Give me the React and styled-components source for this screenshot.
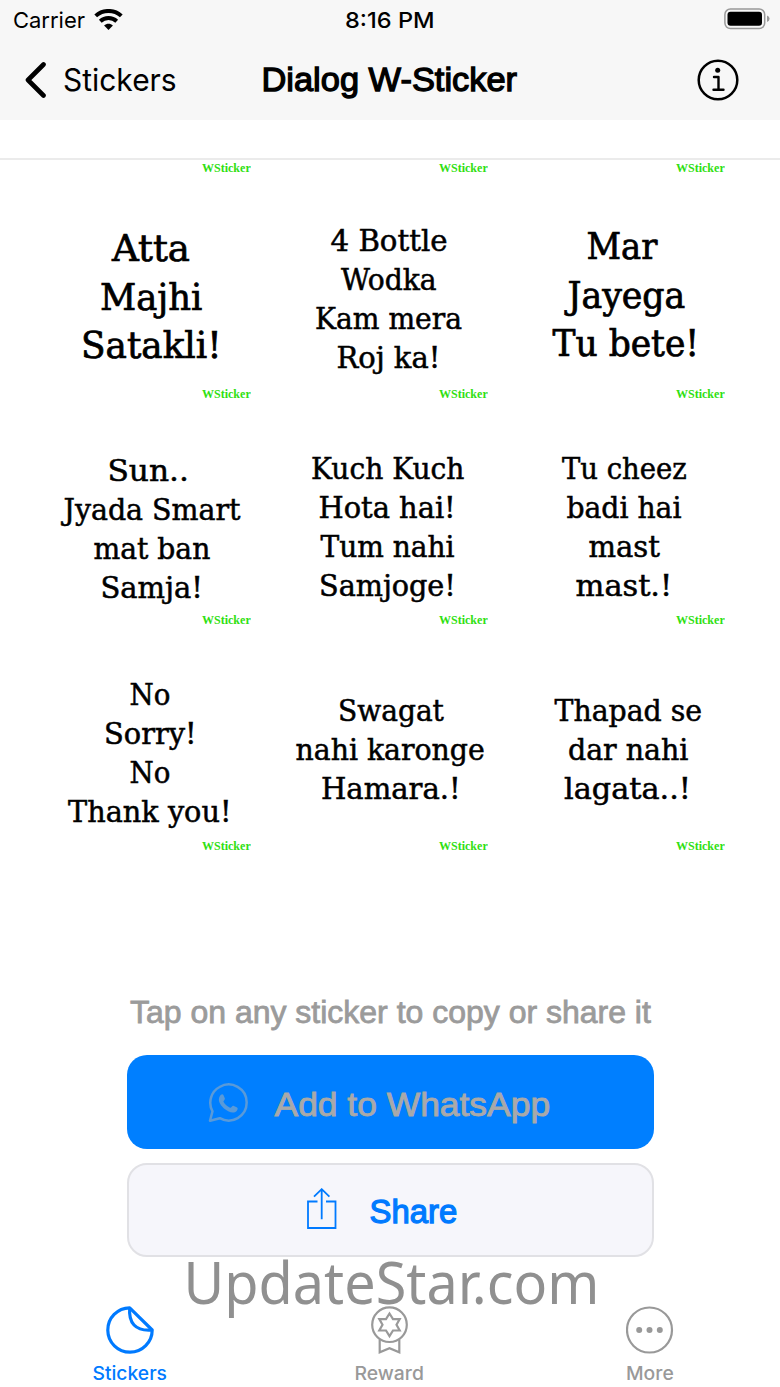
import React, { useLayoutEffect, useRef, useState } from "react";
import styled, { createGlobalStyle } from "styled-components";

const GlobalStyle = createGlobalStyle`
  * {
    box-sizing: border-box;
  }
  body {
    margin: 0;
    background: #fff;
    font-family: Inter, "Liberation Sans", sans-serif;
  }
`;

const Screen = styled.div`
  position: relative;
  display: flex;
  flex-direction: column;
  width: 780px;
  height: 1387px;
  overflow: hidden;
  background: #fff;
  color: #000;
`;

const Header = styled.header`
  height: 120px;
  background: #f7f7f7;
`;

const StatusBar = styled.div`
  display: grid;
  grid-template-columns: 1fr auto 1fr;
  align-items: center;
  height: 40px;
  padding: 0 10px 0 13px;
  font-size: 22px;
`;

const Carrier = styled.div`
  display: flex;
  align-items: center;
  gap: 9px;
`;

const Time = styled.div`
  padding-right: 4px;
  font-weight: 500;
`;

const Battery = styled.div`
  display: flex;
  justify-content: flex-end;
  padding-bottom: 2px;
`;

const NavBar = styled.nav`
  display: grid;
  grid-template-columns: 1fr auto 1fr;
  align-items: center;
  height: 79px;
  padding: 0 41px 0 24px;
`;

const BackLink = styled.div`
  display: flex;
  align-items: center;
  gap: 17px;
  font-size: 31px;
`;

const Title = styled.h1`
  margin: 0;
  padding: 0 0 0 16px;
  font-family: "Liberation Sans", sans-serif;
  font-size: 34px;
  font-weight: 400;
  -webkit-text-stroke: 1.3px;
`;

const InfoButton = styled.div`
  display: flex;
  justify-content: flex-end;
`;

const Divider = styled.div`
  height: 40px;
  border-bottom: 2px solid #ebebeb;
`;

const Grid = styled.div`
  display: grid;
  grid-template-columns: repeat(3, 237.4px);
  grid-template-rows: 15px repeat(3, 226px);
  align-items: end;
  padding-left: 15px;
`;

const Sticker = styled.div`
  display: flex;
  flex-direction: column;
  justify-content: space-between;
  height: 226px;
  padding-top: ${(p) => p.$top}px;
`;

const Lines = styled.div`
  display: flex;
  flex-direction: column;
  align-items: center;
  margin-left: ${(p) => 36 + p.$shift * 2}px;
  margin-right: 1px;
  font-family: "DejaVu Serif Condensed", "DejaVu Serif", serif;
  font-stretch: condensed;
  font-size: ${(p) => (p.$big ? 37 : 30)}px;
  line-height: ${(p) => (p.$big ? 48.6 : 39)}px;
  -webkit-text-stroke: ${(p) => (p.$big ? 0.7 : 0.5)}px;
`;

const Tag = styled.div`
  display: flex;
  justify-content: flex-end;
  padding-right: 2px;
  color: #2fe010;
  font-family: "Liberation Serif", serif;
  font-size: 13px;
  font-weight: 700;
  line-height: 14px;
`;

const Actions = styled.section`
  display: flex;
  flex-direction: column;
  align-items: center;
  padding-top: 140px;
`;

const Hint = styled.p`
  margin: 0 0 22px;
  color: #9b9b9b;
  font-family: "Liberation Sans", sans-serif;
  font-size: 31px;
  line-height: 40px;
  -webkit-text-stroke: 0.8px;
`;

const Button = styled.button`
  display: flex;
  align-items: center;
  justify-content: center;
  gap: ${(p) => p.$gap}px;
  width: 527px;
  height: 94px;
  margin-bottom: 14px;
  padding: ${(p) => (p.$primary ? "2px 22px 0 0" : "0 16px 0 0")};
  border: ${(p) => (p.$primary ? "none" : "2px solid #e1e1e5")};
  border-radius: 20px;
  background: ${(p) => (p.$primary ? "#007fff" : "#f6f6fb")};
  color: ${(p) => (p.$primary ? "#a9a9a9" : "#007aff")};
  font-family: "Liberation Sans", sans-serif;
  font-size: 34px;
  -webkit-text-stroke: ${(p) => (p.$primary ? 0.9 : 1.3)}px;
`;

const ButtonLabel = styled.span`
  padding-top: ${(p) => p.$drop}px;
`;

const TabBar = styled.nav`
  display: grid;
  grid-template-columns: repeat(3, 260px);
  padding-top: 35px;
`;

const Tab = styled.div`
  display: flex;
  flex-direction: column;
  align-items: center;
  gap: 8px;
  color: ${(p) => (p.$active ? "#007aff" : "#999")};
  font-size: 18.5px;
  font-weight: ${(p) => (p.$active ? 500 : 450)};
  line-height: 22px;
`;

const Watermark = styled.div`
  position: absolute;
  top: 1252px;
  left: 183px;
  color: #909090;
  font-family: "Noto Sans", sans-serif;
  font-size: 57.5px;
  line-height: 60px;
`;

const FitBox = styled.span`
  display: flex;
  justify-content: center;
  box-sizing: content-box;
  width: ${(p) => p.$width}px;
  padding-right: ${(p) => p.$trail || 0}px;
  white-space: nowrap;
`;

const FitText = styled.span`
  flex: none;
  transform-origin: center;
`;

// stretches a line of text to a set width, trail is empty room after it
function Fit({ width, trail, children }) {
  const ref = useRef(null);
  const [scale, setScale] = useState(1);
  useLayoutEffect(() => {
    setScale(width / ref.current.offsetWidth);
  }, [width, children]);
  return (
    <FitBox $width={width} $trail={trail}>
      <FitText ref={ref} style={{ transform: `scaleX(${scale})` }}>
        {children}
      </FitText>
    </FitBox>
  );
}

const stickers = [
  { big: true, top: 50, shift: 0, lines: [["Atta", 78], ["Majhi", 102], ["Satakli!", 141]] },
  { top: 46, shift: 0, lines: [["4 Bottle", 117], ["Wodka", 96], ["Kam mera", 147], ["Roj ka!", 104]] },
  { big: true, top: 48, shift: 0, lines: [["Mar", 71, 9], ["Jayega", 118], ["Tu bete!", 147]] },
  { top: 50, shift: 1, lines: [["Sun..", 81, 8], ["Jyada Smart", 177], ["mat ban", 117], ["Samja!", 102]] },
  { top: 48, shift: -1, lines: [["Kuch Kuch", 153], ["Hota hai!", 137], ["Tum nahi", 134], ["Samjoge!", 137]] },
  { top: 48, shift: -2, lines: [["Tu cheez", 125], ["badi hai", 115], ["mast", 71], ["mast.!", 97]] },
  { top: 48, shift: -1, lines: [["No", 41], ["Sorry!", 93], ["No", 41], ["Thank you!", 164]] },
  { top: 64, shift: 2, lines: [["Swagat", 106], ["nahi karonge", 189], ["Hamara.!", 140]] },
  { top: 64, shift: 2, lines: [["Thapad se", 147], ["dar nahi", 120], ["lagata..!", 127]] },
];

const WifiIcon = () => (
  <svg width="29" height="22" viewBox="0 0 29 22" fill="none" stroke="#000">
    <path d="M1.700 6.900C8.800.3 20.200.3 27.300 6.900" strokeWidth="4" />
    <path d="M6.300 12.200c4.600-4.300 11.800-4.300 16.400 0" strokeWidth="4" />
    <path d="M10.100 16.500c2.600-2.300 6.200-2.300 8.800 0L14.500 21z" fill="#000" stroke="none" />
  </svg>
);

const BatteryIcon = () => (
  <svg width="46" height="22" viewBox="0 0 46 22">
    <rect x="0.900" y="1" width="39.800" height="19.600" rx="5.500" fill="none" stroke="#999" strokeWidth="1.500" />
    <rect x="3.500" y="3.800" width="34.500" height="14" rx="3" fill="#000" />
    <path d="M43 7.500q2.600 1 2.600 3.300T43 14z" fill="#999" />
  </svg>
);

const BackIcon = () => (
  <svg width="22" height="36" viewBox="0 0 22 36" fill="none" stroke="#000" strokeWidth="4.600" strokeLinecap="round" strokeLinejoin="round">
    <path d="M19.500 2.500 4 18l15.500 15.500" />
  </svg>
);

const InfoIcon = () => (
  <svg width="42" height="42" viewBox="0 0 42 42" fill="none" stroke="#000">
    <circle cx="21" cy="21" r="19.300" strokeWidth="2.500" />
    <circle cx="20.700" cy="11.300" r="2.500" fill="#000" stroke="none" />
    <path d="M17 18h4.500v12.500M16.500 30.700h10" strokeWidth="2.400" strokeLinecap="round" strokeLinejoin="round" />
  </svg>
);

const WhatsAppIcon = () => (
  <svg width="40" height="40" viewBox="0 0 40 40" fill="none" stroke="#5a9ad8">
    <path d="M2 37.800 4.500 28.300C-.3 19.700 3 8.500 11.600 4a18 18 0 1 1 .2 31.200z" strokeWidth="2.500" strokeLinejoin="round" />
    <path d="M12.900 11.800c.8-.9 2-.9 2.500.1l1.500 3.500c.4 1-1.700 2.300-1.500 3.200.8 2.200 4.200 5.200 6.700 6.200 1.200.3 2.200-2.400 3.300-2l3.700 1.800c1.100.6.5 2.400-.4 3.300-2.200 2-5 1.900-8.500.3-4.200-2-8.200-6.200-9.200-10.200-.5-2.400.4-4.600 1.900-6.200z" fill="#5a9ad8" stroke="none" />
  </svg>
);

const ShareIcon = () => (
  <svg width="30" height="44" viewBox="0 0 30 44" fill="none" stroke="#007aff" strokeWidth="1.800">
    <path d="M10.500 13.500H1V40h27.500V13.500H19M14.700 31.300V1.200M7 8.700l7.700-7.500 7.700 7.500" />
  </svg>
);

const StickerIcon = () => (
  <svg width="48" height="48" viewBox="0 0 48 48" fill="none" stroke="currentColor" strokeWidth="3.200" strokeLinejoin="round">
    <path d="M23.700 1.800A22.200 22.200 0 1 0 46.200 24z" />
    <path d="M23.700 1.800C22.500 16.500 29 25.500 46.200 24" />
  </svg>
);

const RewardIcon = () => (
  <svg width="48" height="48" viewBox="0 0 48 48" fill="none" stroke="currentColor" strokeWidth="2.200">
    <circle cx="23.500" cy="18.700" r="17.300" />
    <path d="m23.500 7.500 3.500 5.600h6.700l-3.200 5.700 3.200 5.700h-6.700l-3.500 5.600-3.500-5.600h-6.700l3.200-5.700-3.200-5.700h6.700z" />
    <path d="M13.700 33.500v12.800l9.800-4 9.800 4V33.500" />
  </svg>
);

const MoreIcon = () => (
  <svg width="48" height="48" viewBox="0 0 48 48">
    <circle cx="23.500" cy="24" r="22.500" fill="none" stroke="currentColor" strokeWidth="2.200" />
    <g fill="currentColor">
      <circle cx="13.200" cy="24" r="3" />
      <circle cx="23.500" cy="24" r="3" />
      <circle cx="33.800" cy="24" r="3" />
    </g>
  </svg>
);

const StickerTag = () => (
  <Tag>
    <Fit width={49}>WSticker</Fit>
  </Tag>
);

export default function App() {
  return (
    <Screen>
      <GlobalStyle />
      <Header>
        <StatusBar>
          <Carrier>
            <Fit width={72}>Carrier</Fit>
            <WifiIcon />
          </Carrier>
          <Time>
            <Fit width={90}>8:16 PM</Fit>
          </Time>
          <Battery>
            <BatteryIcon />
          </Battery>
        </StatusBar>
        <NavBar>
          <BackLink>
            <BackIcon />
            <Fit width={114}>Stickers</Fit>
          </BackLink>
          <Title>
            <Fit width={256}>Dialog W-Sticker</Fit>
          </Title>
          <InfoButton>
            <InfoIcon />
          </InfoButton>
        </NavBar>
      </Header>
      <Divider />
      <Grid>
        <StickerTag />
        <StickerTag />
        <StickerTag />
        {stickers.map((s, i) => (
          <Sticker key={i} $top={s.top}>
            <Lines $big={s.big} $shift={s.shift}>
              {s.lines.map(([text, width, trail], j) => (
                <Fit key={j} width={width} trail={trail}>{text}</Fit>
              ))}
            </Lines>
            <StickerTag />
          </Sticker>
        ))}
      </Grid>
      <Actions>
        <Hint>
          <Fit width={521}>Tap on any sticker to copy or share it</Fit>
        </Hint>
        <Button $primary $gap={27}>
          <WhatsAppIcon />
          <ButtonLabel $drop={2}>
            <Fit width={276}>Add to WhatsApp</Fit>
          </ButtonLabel>
        </Button>
        <Button $gap={32}>
          <ShareIcon />
          <ButtonLabel $drop={3}>
            <Fit width={88}>Share</Fit>
          </ButtonLabel>
        </Button>
      </Actions>
      <TabBar>
        <Tab $active>
          <StickerIcon />
          <Fit width={75} trail={1}>Stickers</Fit>
        </Tab>
        <Tab>
          <RewardIcon />
          <Fit width={69} trail={1}>Reward</Fit>
        </Tab>
        <Tab>
          <MoreIcon />
          <Fit width={48} trail={1}>More</Fit>
        </Tab>
      </TabBar>
      <Watermark>
        <Fit width={416}>UpdateStar.com</Fit>
      </Watermark>
    </Screen>
  );
}
